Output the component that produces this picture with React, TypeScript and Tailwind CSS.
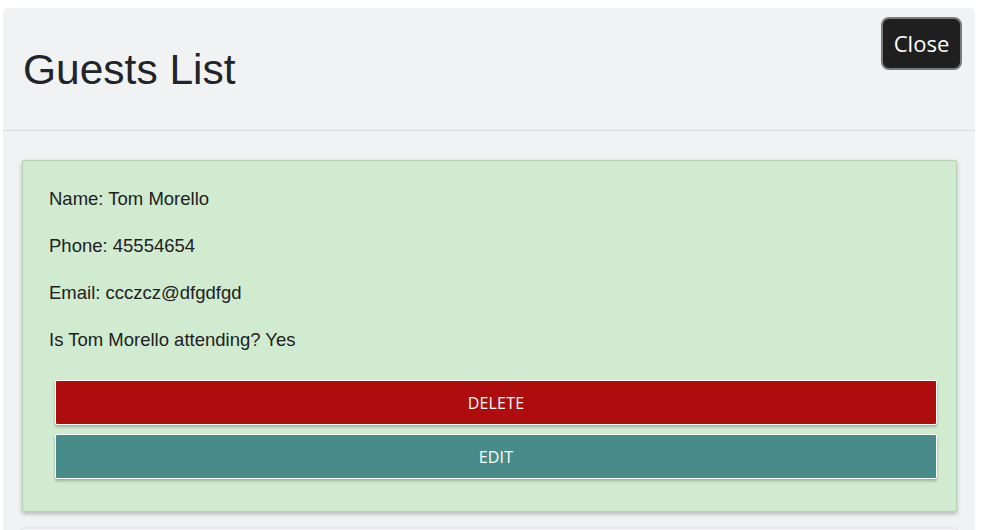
import React from "react";

type Guest = {
  name: string;
  phone: string;
  email: string;
  attending: boolean;
};

const guests: Guest[] = [
  { name: "Tom Morello", phone: "45554654", email: "ccczcz@dfgdfgd", attending: true },
  { name: "Zack de la Rocha", phone: "45554655", email: "zack@dfgdfgd", attending: false },
];

const GuestCard = ({ guest }: { guest: Guest }) => {
  const cardColor = guest.attending
    ? "bg-[#d0ebd0] border-[#b4d2b4]"
    : "bg-[#f6f6f8] border-[#e6e7ea]";

  return (
    <div className={`${cardColor} border rounded-[2px] shadow-[0_2px_4px_rgba(0,0,0,0.25)] pt-[24px] pb-[32px]`}>
      <div className="flex flex-col gap-[20px] pl-[26px] text-[18.5px] leading-[27px] text-[#212121] font-['Liberation_Sans',Arial,sans-serif]">
        <p>Name: {guest.name}</p>
        <p>Phone: {guest.phone}</p>
        <p>Email: {guest.email}</p>
        <p>
          Is {guest.name} attending? {guest.attending ? "Yes" : "No"}
        </p>
      </div>
      <div className="flex flex-col gap-[9px] mt-[27px] ml-[32px] mr-[19px] font-['Open_Sans',sans-serif]">
        <button className="h-[45px] bg-[#ad0d0d] border border-white rounded-[2px] shadow-[0_2px_3px_rgba(0,0,0,0.25)] text-white text-[16px] tracking-[0.2px]">
          DELETE
        </button>
        <button className="h-[45px] bg-[#478c88] border border-white rounded-[2px] shadow-[0_2px_3px_rgba(0,0,0,0.25)] text-white text-[16px] tracking-[0.2px]">
          EDIT
        </button>
      </div>
    </div>
  );
};

const App = () => {
  return (
    <div className="min-h-screen bg-white pt-[8px] pl-[3px]">
      <div className="w-[972px] bg-[#f1f2f4] rounded-[5px]">
        <header className="relative h-[123px] border-b border-[#dcdee2] flex items-center pl-[20px]">
          <h1 className="text-[42.5px] text-[#212529] font-['Liberation_Sans',Arial,sans-serif] mt-[2px]">
            Guests List
          </h1>
          <button className="absolute top-[9px] right-[13px] w-[81px] h-[53px] bg-[#1f1f1f] border-2 border-[#7a7a7a] rounded-[8px] text-white text-[22px] font-['Open_Sans',sans-serif]">
            Close
          </button>
        </header>
        <div className="flex flex-col gap-[16px] pt-[29px] pl-[19px] pr-[18px] pb-[20px]">
          {guests.map((g) => (
            <GuestCard key={g.name} guest={g} />
          ))}
        </div>
      </div>
    </div>
  );
};

export default App;
